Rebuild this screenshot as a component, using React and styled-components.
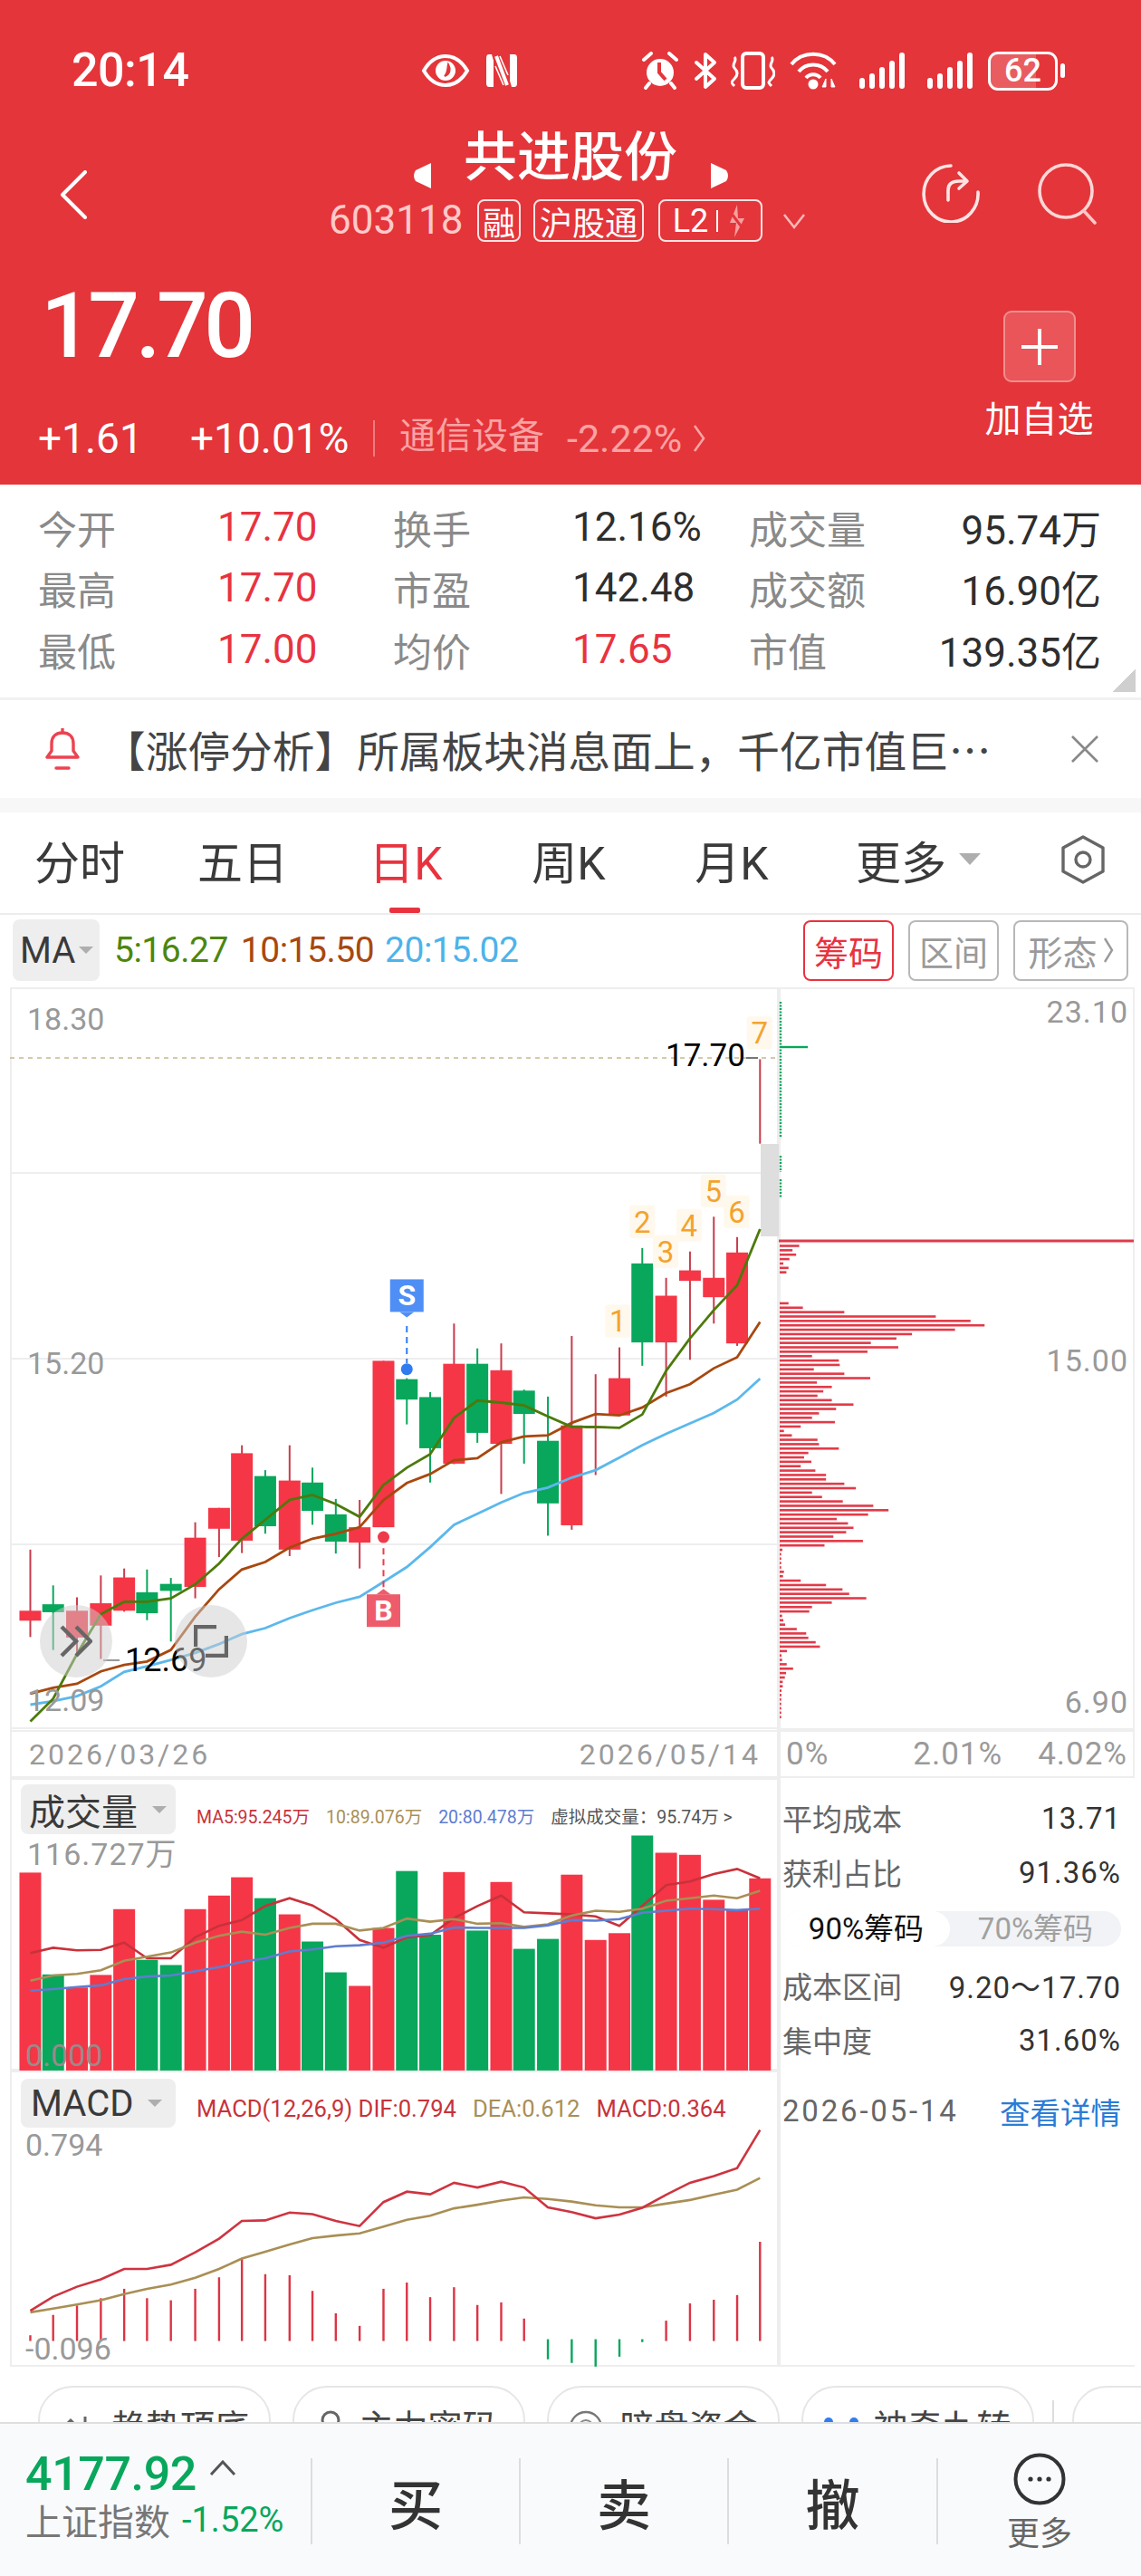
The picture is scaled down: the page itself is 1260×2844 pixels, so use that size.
import React from "react";
import styled, { createGlobalStyle } from "styled-components";

const SANS = `"Roboto","Noto Sans CJK SC",sans-serif`;
const CJK = `"Noto Sans CJK SC","Roboto",sans-serif`;
const RED = "#E8333F";
const UP = "#F53647";
const DOWN = "#08A75C";
const WICK = "#C93C4B";
const TAN = "#A98F55";

const GlobalStyle = createGlobalStyle`
  html, body { margin: 0; padding: 0; background: #fff; }
  body { font-family: ${SANS}; }
  * { box-sizing: border-box; }
`;

/* ---------- data, read from the picture ---------- */
const XS = [61,107,155,203,250,296,344,393,441,487,534,583,629,676,724,772,819,866,914,961,1009,1055,1103,1151,1199,1247,1293,1341,1389,1437,1484,1530];
const CANDLES = [
  [1150,1326,1273,1293,1],[1222,1352,1260,1276,0],[1246,1365,1273,1327,1],[1202,1370,1258,1303,1],
  [1188,1275,1206,1273,1],[1190,1292,1236,1278,0],[1207,1335,1219,1233,0],[1095,1248,1126,1225,1],
  [1066,1165,1066,1108,1],[940,1157,956,1132,1],[990,1118,1002,1103,0],[940,1163,1011,1150,1],
  [985,1100,1015,1072,0],[1048,1158,1079,1134,0],[1050,1188,1105,1136,1],[770,1105,770,1105,1],
  [805,898,807,848,0],[833,1015,843,946,0],[695,978,776,977,1],[745,935,776,915,0],
  [735,1038,789,937,1],[828,977,830,877,0],[842,1122,931,1057,0],[720,1110,900,1101,1],
  [797,1000,902,906,1],[743,880,805,880,1],[543,780,574,733,0],[603,842,639,733,1],
  [550,768,588,609,1],[480,695,603,642,1],[521,740,552,735,1],
];
const MA5 = [1496,1450,1360,1280,1255,1255,1248,1220,1178,1128,1090,1050,1040,1058,1084,1020,985,958,885,850,854,860,882,903,903,905,878,790,725,668,618,505];
const MA10 = [1440,1428,1420,1395,1382,1375,1352,1285,1230,1190,1175,1146,1128,1118,1105,1050,1016,998,970,966,934,922,920,895,877,880,864,835,817,785,763,692];
const MA20 = [1462,1455,1445,1425,1396,1385,1372,1358,1340,1320,1308,1288,1272,1257,1245,1215,1185,1145,1100,1078,1055,1036,1025,1005,990,965,940,917,896,875,848,806];
const MARKS = [[1244,690,"1"],[1293,490,"2"],[1340,550,"3"],[1387,497,"4"],[1436,428,"5"],[1483,470,"6"],[1529,110,"7"]];

const VOLS = [[221,1],[416,0],[441,1],[417,1],[291,1],[388,0],[398,0],[291,1],[265,1],[230,1],[270,0],[301,1],[353,0],[412,0],[438,1],[327,1],[218,0],[340,0],[220,1],[332,0],[239,1],[367,0],[348,0],[225,1],[350,1],[337,1],[150,0],[183,1],[187,1],[273,1],[292,1],[232,1]];
const VMA5 = [375,365,370,369,355,385,385,345,323,312,285,270,284,310,350,365,345,341,308,285,265,297,299,301,305,323,285,245,238,224,214,232];
const VMA10 = [428,418,415,408,390,382,374,355,342,334,340,327,319,319,332,327,309,315,310,319,318,325,320,303,294,296,290,275,270,265,270,256];
const VMA20 = [447,444,440,437,425,420,418,410,402,392,385,372,368,362,360,355,342,338,326,327,327,327,322,312,313,310,298,294,290,291,293,290];

const MBARS = [1107,1068,1050,1036,1018,1036,1040,1018,996,960,990,992,1022,1065,1089,1018,1006,1034,1015,1049,1044,1075,1153,1160,1167,1148,1120,1079,1046,1039,1030,928];
const DIF = [1060,1033,1014,1000,980,980,972,948,922,888,887,872,875,888,898,852,832,837,815,824,813,824,862,871,883,876,863,838,815,802,787,714];
const DEA = [1063,1056,1048,1040,1028,1018,1010,997,980,960,947,933,921,916,912,899,886,878,864,857,849,843,846,851,858,862,862,855,848,838,828,806];

const CHIPS_A = [64,42,54,32,12,29,22];
const CHIPS_B = [29,76,212,512,626,672,575,434,383,299,389,288,106,194,197,112,212,297,122,171,143,124,171,242,185,129,106,181,69,14,40,124,129,194,94,80,104,69,117,152,152,212,250,106,139,207,307,357,290,187,224,242,218,176,273,147,9,5,5,5,5,14,11,69,152,206,228,284,171,106,97,8,12,18,56,87,94,118,132,24,6,8,23,44,21,17,10,10,6,6,5,5,5,5,5];

const kx = (z) => z / 1.823 - 11;
const ky = (z) => z / 1.823 - 10;
const vy = (z) => z / 1.7345 - 23;
const my = (z) => z / 1.7345 - 346;
const line = (arr, fy) => arr.map((v, i) => `${kx(XS[i]).toFixed(1)},${fy(v).toFixed(1)}`).join(" ");

/* ---------- layout ---------- */
const Page = styled.div`
  position: relative;
  width: 1260px;
  height: 2844px;
  overflow: hidden;
  background: #fff;
  color: #333;
`;

const Header = styled.header`
  height: 535px;
  padding-top: 56px;
  background: #E4353A;
  color: #fff;
`;

const StatusBar = styled.div`
  display: flex;
  align-items: center;
  height: 44px;
  padding: 0 84px 0 79px;
`;
const Clock = styled.span`
  width: 128px;
  font-size: 52px;
  line-height: 44px;
  font-weight: 500;
  letter-spacing: -0.5px;
`;
const StatusLeft = styled.div`
  display: flex;
  align-items: center;
  gap: 16px;
  margin-left: 258px;
`;
const StatusRight = styled.div`
  display: flex;
  align-items: center;
  margin-left: auto;
`;
const Slot = styled.span`
  display: flex;
  margin-left: ${(p) => p.$ml || 0}px;
`;
const Battery = styled.span`
  position: relative;
  display: flex;
  align-items: center;
  justify-content: center;
  width: 77px;
  height: 43px;
  margin-left: 17px;
  border: 3px solid #fff;
  border-radius: 11px;
  background: linear-gradient(90deg, rgba(255,255,255,.2) 70%, transparent 70%);
  font-size: 36px;
  font-weight: 500;
  line-height: 1;
`;
const BatteryNub = styled.span`
  width: 5px;
  height: 16px;
  margin-left: 3px;
  border-radius: 3px;
  background: #fff;
`;

const NavRow = styled.div`
  display: grid;
  grid-template-columns: 363px 654px 1fr;
  height: 130px;
  margin-top: 40px;
`;
const NavSide = styled.div`
  display: flex;
  align-items: flex-start;
  padding: 48px 0 0 66px;
`;
const NavCenter = styled.div`
  display: flex;
  flex-direction: column;
`;
const TitleRow = styled.div`
  display: flex;
  height: 68px;
  align-items: flex-start;
  padding-left: 92px;
`;
const Title = styled.h1`
  margin: 0 37px 0 36px;
  width: 236px;
  font-size: 59px;
  line-height: 68px;
  font-weight: 500;
  white-space: nowrap;
`;
const NavArrow = styled.svg`
  margin-top: 40px;
`;
const SubRow = styled.div`
  display: flex;
  align-items: center;
  height: 47px;
  margin-top: 12px;
  color: #FFC9C9;
`;
const Code = styled.span`
  width: 164px;
  font-size: 44px;
  line-height: 47px;
  white-space: nowrap;
`;
const Tag = styled.span`
  display: flex;
  align-items: center;
  justify-content: center;
  gap: 9px;
  width: ${(p) => p.$w}px;
  height: 47px;
  margin-right: ${(p) => p.$mr || 0}px;
  border: 2px solid #FBE3E3;
  border-radius: 8px;
  color: #fff;
  font-size: 36px;
  white-space: nowrap;
`;
const TagBar = styled.i`
  width: 2px;
  height: 24px;
  background: #fff;
`;
const NavActions = styled.div`
  display: flex;
  align-items: flex-start;
  gap: 63px;
  padding-top: 40px;
`;

const PriceRow = styled.div`
  display: flex;
  justify-content: space-between;
  padding: 0 52px 0 42px;
  margin-top: 40px;
`;
const PriceBlock = styled.div`
  display: flex;
  flex-direction: column;
`;
const BigPrice = styled.div`
  margin-left: 3px;
  height: 100px;
  font-size: 100px;
  line-height: 100px;
  font-weight: 500;
  letter-spacing: -4.5px;
`;
const ChangeRow = styled.div`
  display: flex;
  align-items: center;
  height: 44px;
  margin-top: 52px;
  font-size: 46px;
  white-space: nowrap;
`;
const Change = styled.span`
  width: ${(p) => p.$w}px;
`;
const ChangeBar = styled.i`
  width: 2px;
  height: 40px;
  margin: 0 27px 0 0;
  background: #EE7C80;
`;
const Sector = styled.span`
  color: #F9A3A3;
  font-size: 40px;
  line-height: 40px;
  margin: -4px 25px 0 0;
`;
const SectorPct = styled.span`
  color: #F9A3A3;
  font-size: 43px;
  margin-right: 12px;
`;
const AddBlock = styled.div`
  display: flex;
  flex-direction: column;
  align-items: center;
  width: 121px;
  margin-top: 33px;
`;
const AddBox = styled.div`
  display: flex;
  align-items: center;
  justify-content: center;
  width: 80px;
  height: 79px;
  border: 2px solid #F08F8F;
  border-radius: 9px;
  background: #E95558;
`;
const AddText = styled.span`
  margin-top: 22px;
  font-size: 40px;
  line-height: 40px;
  white-space: nowrap;
`;

const Stats = styled.section`
  position: relative;
  height: 238px;
  padding: 13px 0 0 42px;
  border-bottom: 3px solid #F1F1F1;
  display: grid;
  grid-template-columns: 198px 194px 198px 195px 389px;
  grid-auto-rows: 67.5px;
  align-content: start;
`;
const StatLabel = styled.span`
  display: flex;
  align-items: center;
  font-size: 43px;
  color: #8A8A8A;
`;
const StatValue = styled.span`
  display: flex;
  align-items: center;
  font-size: 44px;
  color: ${(p) => (p.$red ? RED : "#2E2E2E")};
  white-space: nowrap;
`;
const StatPair = styled.div`
  display: flex;
  align-items: center;
  justify-content: space-between;
`;
const Corner = styled.i`
  position: absolute;
  right: 6px;
  bottom: 6px;
  width: 26px;
  height: 26px;
  background: linear-gradient(135deg, transparent 50%, #CFCFCF 50%);
`;

const Notice = styled.div`
  display: flex;
  align-items: center;
  height: 108px;
  padding-left: 50px;
  background: #fff;
`;
const NoticeText = styled.span`
  flex: 1;
  margin-left: 26px;
  font-family: ${CJK};
  font-size: 46.7px;
  line-height: 60px;
  color: #444;
  white-space: nowrap;
`;
const NoticeClose = styled.svg`
  margin-right: 46px;
`;
const Gap = styled.div`
  height: 16px;
  background: #F7F7F7;
`;

const Tabs = styled.nav`
  display: grid;
  grid-template-columns: repeat(5, 180px) 232px 1fr;
  align-items: stretch;
  height: 113px;
  border-bottom: 2px solid #ECECEC;
`;
const Tab = styled.div`
  position: relative;
  display: flex;
  align-items: center;
  justify-content: center;
  gap: 14px;
  padding: 0 4px 8px 0;
  font-size: 50px;
  color: ${(p) => (p.$active ? RED : "#3A3A3A")};
`;
const TabUnderline = styled.i`
  position: absolute;
  left: 50%;
  bottom: 0;
  width: 34px;
  height: 6px;
  margin-left: -20px;
  border-radius: 2px;
  background: ${RED};
`;
const Caret = styled.i`
  width: 0;
  height: 0;
  border-left: ${(p) => p.$s}px solid transparent;
  border-right: ${(p) => p.$s}px solid transparent;
  border-top: ${(p) => p.$s * 1.1}px solid #AEAEAE;
`;
const GearCell = styled.div`
  display: flex;
  align-items: center;
  justify-content: center;
  padding-bottom: 8px;
`;

const MaRow = styled.div`
  display: flex;
  align-items: center;
  height: 78px;
  padding: 0 14px 0 14px;
`;
const Selector = styled.div`
  display: flex;
  align-items: center;
  gap: ${(p) => p.$gap || 4}px;
  width: ${(p) => p.$w}px;
  height: ${(p) => p.$h}px;
  padding-left: ${(p) => p.$pl || 0}px;
  border-radius: 8px;
  background: #EEEEEE;
  font-size: 40px;
  color: #3A3A3A;
  white-space: nowrap;
`;
const MaValue = styled.span`
  margin-left: ${(p) => p.$ml}px;
  font-size: 39px;
  letter-spacing: -0.5px;
  color: ${(p) => p.$c};
  white-space: nowrap;
`;
const ModeGroup = styled.div`
  display: flex;
  gap: 16px;
  margin-left: auto;
`;
const ModeBtn = styled.div`
  display: flex;
  align-items: center;
  justify-content: center;
  gap: 6px;
  width: ${(p) => p.$w}px;
  height: 67px;
  border: 2px solid ${(p) => (p.$on ? RED : "#B8B8B8")};
  border-radius: 8px;
  font-size: 38px;
  color: ${(p) => (p.$on ? RED : "#9A9A9A")};
  white-space: nowrap;
`;

const Charts = styled.div`
  display: grid;
  grid-template-columns: 849px 393px;
  grid-template-rows: 873px 650px;
  margin-left: 11px;
  margin-top: 2px;
`;
const Panel = styled.div`
  position: relative;
  height: ${(p) => p.$h}px;
  box-shadow: inset 0 0 0 2px #EEEEEE;
`;
const LeftCol = styled.div`
  display: flex;
  flex-direction: column;
`;
const ChartSvg = styled.svg`
  position: absolute;
  left: 0;
  top: 0;
  display: block;
`;
const AxisLabel = styled.span`
  position: absolute;
  left: ${(p) => p.$x}px;
  top: ${(p) => p.$y}px;
  transform: translateY(-50%);
  font-size: ${(p) => p.$size || 34}px;
  letter-spacing: ${(p) => p.$ls || 0}px;
  color: ${(p) => p.$c || "#999999"};
  white-space: nowrap;
`;
const RightLabel = styled(AxisLabel)`
  left: auto;
  right: ${(p) => p.$r}px;
`;
const FloatBtn = styled.div`
  position: absolute;
  left: ${(p) => p.$x}px;
  top: 682px;
  display: flex;
  align-items: center;
  justify-content: center;
  width: 80px;
  height: 80px;
  border-radius: 50%;
  background: rgba(205, 205, 205, 0.5);
`;
const DateRow = styled.div`
  position: absolute;
  left: 0;
  right: 0;
  bottom: 0;
  display: flex;
  align-items: center;
  justify-content: space-between;
  height: 53px;
  padding: 0 ${(p) => p.$pr}px 0 ${(p) => p.$pl}px;
  box-shadow: inset 0 2px 0 #EEEEEE;
  font-size: ${(p) => p.$size}px;
  letter-spacing: ${(p) => p.$ls}px;
  color: #9A9A9A;
`;
const MidPct = styled.span`
  margin-left: 54px;
`;
const PanelHead = styled.div`
  position: relative;
  display: flex;
  align-items: flex-start;
  padding: ${(p) => p.$pt}px 0 0 12px;
`;
const LegendRow = styled.div`
  display: flex;
  align-items: center;
  gap: ${(p) => p.$gap}px;
  height: 55px;
  margin-left: 23px;
  padding-top: ${(p) => p.$offset}px;
`;
const Legend = styled.span`
  font-size: ${(p) => p.$size}px;
  color: ${(p) => p.$c};
  white-space: nowrap;
`;

const Info = styled.aside`
  position: relative;
  height: 650px;
  padding: 14px 15px 0 4px;
  box-shadow: inset 2px 0 0 #EEEEEE, inset 0 -2px 0 #EEEEEE;
`;
const InfoRow = styled.div`
  display: flex;
  align-items: center;
  justify-content: space-between;
  height: 60px;
  margin-top: ${(p) => p.$mt || 0}px;
  font-size: 33px;
  white-space: nowrap;
`;
const InfoLabel = styled.span`
  color: #666;
  letter-spacing: ${(p) => p.$ls || 0}px;
`;
const InfoValue = styled.span`
  color: #333;
  letter-spacing: 1px;
`;
const InfoLink = styled.span`
  font-size: 33.5px;
  color: #2A7CD6;
`;
const Toggle = styled.div`
  display: grid;
  grid-template-columns: 185px 1fr;
  height: 39px;
  margin-top: 13px;
  border-radius: 20px;
  background: #F1F3F6;
  font-size: 33px;
  line-height: 39px;
  text-align: center;
  color: #A0A0A0;
  white-space: nowrap;
`;
const ToggleOn = styled.span`
  border-radius: 20px;
  background: #fff;
  color: #111;
`;

const PillRow = styled.div`
  display: flex;
  align-items: flex-start;
  gap: 24px;
  margin-top: 21px;
  padding-left: 42px;
  overflow: hidden;
`;
const Pill = styled.div`
  display: flex;
  align-items: flex-start;
  justify-content: center;
  gap: ${(p) => p.$gap || 20}px;
  flex: none;
  width: 257px;
  height: 76px;
  padding-top: 24px;
  border: 2px solid #E6E6E6;
  border-radius: 38px;
  font-size: 38px;
  line-height: 40px;
  color: #444;
  white-space: nowrap;
`;
const PillSep = styled.i`
  flex: none;
  width: 2px;
  height: 30px;
  margin: 16px -4px 0 -4px;
  background: #DDD;
`;

const BottomBar = styled.footer`
  position: absolute;
  left: 0;
  right: 0;
  bottom: 0;
  display: grid;
  grid-template-columns: 343px 230px 230px 231px 226px;
  height: 170px;
  padding-top: 38px;
  border-top: 2px solid #DEDEDE;
  background: #F9FAFC;
`;
const IndexCell = styled.div`
  display: flex;
  flex-direction: column;
  height: 95px;
  padding-left: 28px;
`;
const IndexTop = styled.div`
  display: flex;
  align-items: flex-start;
  height: 52px;
  margin-top: -8px;
`;
const IndexValue = styled.span`
  font-size: 52px;
  line-height: 52px;
  font-weight: 500;
  letter-spacing: -0.4px;
  color: ${DOWN};
`;
const IndexArrow = styled.svg`
  margin: 10px 0 0 14px;
`;
const IndexBottom = styled.div`
  display: flex;
  align-items: center;
  gap: 13px;
  height: 44px;
  margin-top: 2px;
`;
const IndexName = styled.span`
  font-size: 40px;
  color: #777;
  white-space: nowrap;
`;
const IndexPct = styled.span`
  font-size: 38px;
  color: ${DOWN};
`;
const ActionCell = styled.div`
  display: flex;
  align-items: center;
  justify-content: center;
  height: 95px;
  border-left: 2px solid #DDDDDD;
  font-size: 60px;
  font-weight: 500;
  color: #333;
`;
const MoreCell = styled.div`
  display: flex;
  flex-direction: column;
  align-items: center;
  height: 95px;
  border-left: 2px solid #DDDDDD;
  font-size: 36px;
  line-height: 40px;
  color: #666;
`;
const MoreIcon = styled.svg`
  margin-top: -6px;
  margin-bottom: 12px;
  flex: none;
`;

/* ---------- small drawings ---------- */
const W = "#fff";
const HEAD = "#E4353A";
const EyeIcon = () => (
  <svg width="54" height="36" viewBox="0 0 54 36">
    <path d="M3 18 C10 6 18 2 27 2 S44 6 51 18 C44 30 36 34 27 34 S10 30 3 18Z" fill="none" stroke={W} strokeWidth="4" />
    <circle cx="27" cy="18" r="11" fill={W} />
    <path d="M30 11 C33 16 32 22 26 24 C30 20 29 15 30 11Z" fill={HEAD} stroke={HEAD} strokeWidth="2" />
  </svg>
);
const NfcIcon = () => (
  <svg width="38" height="38" viewBox="0 0 38 38">
    <path d="M10 1 H5 Q2 1 2 5 V33 Q2 37 5 37 H10 V8 L8 1 Z M28 37 H33 Q36 37 36 33 V5 Q36 1 33 1 H28 V30 L30 37 Z" fill={W} />
    <path d="M13 3 L25 35" stroke={W} strokeWidth="4" />
    <path d="M17 3 L26 24 M12 14 L21 35" stroke={W} strokeWidth="1.6" />
  </svg>
);
const AlarmIcon = () => (
  <svg width="42" height="42" viewBox="0 0 42 42">
    <circle cx="21" cy="23" r="15" fill={W} />
    <path d="M3 9 L11 2 M39 9 L31 2 M9 35 L5 40 M33 35 L37 40" stroke={W} strokeWidth="4" strokeLinecap="round" />
    <path d="M20 12 V23 L27 31" stroke={HEAD} strokeWidth="4" fill="none" />
  </svg>
);
const BtIcon = () => (
  <svg width="26" height="42" viewBox="0 0 26 42">
    <path d="M3 12 L23 30 L13 39 V3 L23 12 L3 30" fill="none" stroke={W} strokeWidth="4" strokeLinejoin="round" strokeLinecap="round" />
  </svg>
);
const VibrateIcon = () => (
  <svg width="49" height="42" viewBox="0 0 49 42">
    <rect x="13" y="2" width="23" height="38" rx="4" fill="none" stroke={W} strokeWidth="4" />
    <path d="M4 6 C8 10 0 14 4 18 S8 26 4 30 S0 34 4 38 M45 6 C49 10 41 14 45 18 S49 26 45 30 S41 34 45 38" fill="none" stroke={W} strokeWidth="3" />
  </svg>
);
const WifiIcon = () => (
  <svg width="52" height="42" viewBox="0 0 52 42">
    <path d="M2 14 C14 -1 38 -1 50 14 M10 22 C18 12 34 12 42 22 M18 29 C22 24 30 24 34 29" fill="none" stroke={W} strokeWidth="4" />
    <circle cx="26" cy="36" r="5.5" fill={W} />
    <path d="M40 30 L36 39 H40 V30 M46 30 V39 L50 39 Z" fill={W} stroke={W} strokeWidth="1" />
  </svg>
);
const SignalIcon = () => (
  <svg width="50" height="42" viewBox="0 0 50 42">
    <g fill={W}>
      <rect x="0" y="29" width="6" height="12" rx="3" />
      <rect x="11" y="24" width="6" height="17" rx="3" />
      <rect x="22" y="17" width="6" height="24" rx="3" />
      <rect x="33" y="10" width="6" height="31" rx="3" />
      <rect x="44" y="1" width="6" height="40" rx="3" />
    </g>
  </svg>
);
const BackIcon = () => (
  <svg width="30" height="54" viewBox="0 0 30 54">
    <path d="M28 2 L3 27 L28 52" fill="none" stroke={W} strokeWidth="4" strokeLinecap="round" strokeLinejoin="round" />
  </svg>
);
const ShareIcon = () => (
  <svg width="66" height="66" viewBox="0 0 66 66">
    <g fill="none" stroke="#FFE4E4" strokeWidth="3.6" strokeLinecap="round" strokeLinejoin="round">
      <path d="M33 3 A30 31 0 1 0 63 32" />
      <path d="M30 41 V30 Q30 20 42 20 H50" />
      <path d="M42 11 L51 20 L42 28" />
    </g>
  </svg>
);
const SearchIcon = () => (
  <svg width="66" height="68" viewBox="0 0 66 68">
    <circle cx="31" cy="31" r="29" fill="none" stroke="#FFD6D6" strokeWidth="3.6" />
    <path d="M51 53 L63 66" stroke="#FFC4C4" strokeWidth="3.6" strokeLinecap="round" />
  </svg>
);
const FlashOff = () => (
  <svg width="24" height="40" viewBox="0 0 24 40">
    <path d="M12 2 L4 22 H11 L9 38 L20 17 H13 Z" fill="#F8A0A0" />
    <path d="M3 8 L21 32" stroke={HEAD} strokeWidth="3" />
  </svg>
);
const Bell = () => (
  <svg width="38" height="46" viewBox="0 0 38 46">
    <g fill="none" stroke="#EC4350" strokeWidth="3.4" strokeLinejoin="round" strokeLinecap="round">
      <path d="M2 32 H36 L31 25 V17 C31 9 26 5 19 5 S7 9 7 17 V25 Z" />
      <path d="M19 1 V5" />
      <path d="M12 44 H26" />
    </g>
  </svg>
);
const Gear = () => (
  <svg width="50" height="54" viewBox="0 0 50 54">
    <path d="M25 2 L47 14 V40 L25 52 L3 40 V14 Z" fill="none" stroke="#666" strokeWidth="3.4" strokeLinejoin="round" />
    <circle cx="25" cy="27" r="8" fill="none" stroke="#666" strokeWidth="3.4" />
  </svg>
);

const Candles = () => (
  <g>
    {CANDLES.map(([wt, wb, bt, bb, up], i) => {
      const x = kx(XS[i]);
      const c = up ? UP : DOWN;
      return (
        <g key={i}>
          <line x1={x} x2={x} y1={ky(wt)} y2={ky(wb)} stroke={up ? WICK : DOWN} strokeWidth="2" />
          <rect x={x - 12} y={ky(bt)} width="24" height={Math.max(ky(bb) - ky(bt), 2)} fill={c} />
        </g>
      );
    })}
    <line x1={kx(1530)} x2={kx(1530)} y1={ky(163)} y2={ky(333)} stroke={WICK} strokeWidth="2" />
  </g>
);

const SignalTag = ({ kind }) => {
  const up = kind === "B";
  const cx = kx(up ? 772 : 819);
  const boxY = ky(up ? 1240 : 606);
  const fill = up ? "#EE5C6C" : "#4F8EF5";
  const dot = up ? "#EE3B4B" : "#2E7CF0";
  return (
    <g>
      <rect x={cx - 18.5} y={boxY} width="37" height="36" fill={fill} />
      <path d={up ? `M${cx - 8} ${boxY} L${cx} ${boxY - 6} L${cx + 8} ${boxY} Z` : `M${cx - 8} ${boxY + 36} L${cx} ${boxY + 42} L${cx + 8} ${boxY + 36} Z`} fill={fill} />
      <line x1={cx} x2={cx} y1={ky(up ? 1147 : 700)} y2={ky(up ? 1228 : 775)} stroke={dot} strokeWidth="2" strokeDasharray="7 5" />
      <circle cx={cx} cy={ky(up ? 1125 : 787)} r="6.5" fill={dot} />
      <text x={cx} y={boxY + 29} textAnchor="middle" fontFamily="Roboto, sans-serif" fontSize="32" fontWeight="700" fill="#fff">{kind}</text>
    </g>
  );
};

const KSvg = () => (
  <ChartSvg width="849" height="820" viewBox="0 0 849 820">
    {[205, 410, 615, 818].map((y) => (
      <line key={y} x1="0" x2="849" y1={y} y2={y} stroke="#EEEEEE" strokeWidth="2" />
    ))}
    <line x1="0" x2="849" y1="78" y2="78" stroke="#C9B98C" strokeWidth="1.6" strokeDasharray="5 5" />
    <rect x="829" y="173" width="20" height="102" fill="#DEDEDE" />
    <Candles />
    <polyline points={line(MA20, ky)} fill="none" stroke="#5BB8EC" strokeWidth="2.8" />
    <polyline points={line(MA10, ky)} fill="none" stroke="#A8480F" strokeWidth="2.8" />
    <polyline points={line(MA5, ky)} fill="none" stroke="#4C7A0B" strokeWidth="2.8" />
    <SignalTag kind="S" />
    <SignalTag kind="B" />
    {MARKS.map(([x, y, t]) => (
      <g key={t}>
        <rect x={kx(x) - 14} y={ky(y) - 18} width="28" height="36" rx="3" fill="#FFF8EC" />
        <text x={kx(x)} y={ky(y) + 12} textAnchor="middle" fontFamily="Roboto, sans-serif" fontSize="33" fill="#F3A32E">{t}</text>
      </g>
    ))}
    <text x="724" y="87" fontFamily="Roboto, sans-serif" fontSize="35" fill="#000">17.70</text>
    <line x1="813" x2="826" y1="78" y2="78" stroke="#777" strokeWidth="2" />
    <line x1="103" x2="121" y1="743" y2="743" stroke="#999" strokeWidth="2" />
    <text x="127" y="755" fontFamily="Roboto, sans-serif" fontSize="36" fill="#000">12.69</text>
  </ChartSvg>
);

const ChipSvg = () => {
  const bar = (v, i, start) => (
    <rect key={`${start}-${i}`} x="1" y={start + i * 4.86} width={v / 2.97} height="2.6" fill="#E23A48" />
  );
  return (
    <ChartSvg width="393" height="820" viewBox="0 0 393 820">
      <line x1="2" x2="2" y1="16" y2="165" stroke={DOWN} strokeWidth="2.4" strokeDasharray="2 1.5" />
      <line x1="2" x2="2" y1="186" y2="204" stroke={DOWN} strokeWidth="2.4" strokeDasharray="2 1.5" />
      <line x1="2" x2="2" y1="212" y2="233" stroke={DOWN} strokeWidth="2.4" strokeDasharray="2 1.5" />
      <line x1="2" x2="32" y1="66" y2="66" stroke={DOWN} strokeWidth="2.4" />
      <line x1="0" x2="392" y1="280" y2="280" stroke="#DC3C4A" strokeWidth="3" />
      {CHIPS_A.map((v, i) => bar(v, i, 284.2))}
      {CHIPS_B.map((v, i) => bar(v, i, 347.6))}
      <line x1="0" x2="393" y1="819" y2="819" stroke="#EEEEEE" strokeWidth="2" />
    </ChartSvg>
  );
};

const VolumeSvg = () => (
  <ChartSvg width="849" height="323" viewBox="0 0 849 323">
    {VOLS.map(([t, up], i) => (
      <rect key={i} x={kx(XS[i]) - 12} y={vy(t)} width="24" height={vy(600) - vy(t)} fill={up ? UP : DOWN} />
    ))}
    <polyline points={line(VMA5, vy)} fill="none" stroke="#C8323A" strokeWidth="2.6" />
    <polyline points={line(VMA10, vy)} fill="none" stroke={TAN} strokeWidth="2.6" />
    <polyline points={line(VMA20, vy)} fill="none" stroke="#5F7DD0" strokeWidth="2.6" />
  </ChartSvg>
);

const MacdSvg = () => (
  <ChartSvg width="849" height="327" viewBox="0 0 849 327">
    {MBARS.map((t, i) => {
      const base = my(1118);
      const y = my(t);
      const down = t > 1118;
      return (
        <rect key={i} x={kx(XS[i]) - 1.2} y={down ? base - 2 : y} width="2.4" height={down ? y - base + 2 : base - y} fill={down ? DOWN : "#DC3444"} />
      );
    })}
    <polyline points={line(DEA, my)} fill="none" stroke={TAN} strokeWidth="2.6" />
    <polyline points={line(DIF, my)} fill="none" stroke="#CE3440" strokeWidth="2.6" />
  </ChartSvg>
);

const STATS = [
  ["今开", "17.70", true, "换手", "12.16%", false, "成交量", "95.74万"],
  ["最高", "17.70", true, "市盈", "142.48", false, "成交额", "16.90亿"],
  ["最低", "17.00", true, "均价", "17.65", true, "市值", "139.35亿"],
];

const PILLS = [
  ["趋势顶底", 25, <svg key="a" width="32" height="36" viewBox="0 0 32 36"><path d="M2 22 L12 12 L22 22 M12 12 V34 M28 8 V34" fill="none" stroke="#666" strokeWidth="3" /></svg>],
  ["主力密码", 20, <svg key="b" width="22" height="36" viewBox="0 0 22 36"><circle cx="11" cy="12" r="9" fill="none" stroke="#666" strokeWidth="3" /></svg>],
  ["暗盘资金", 18, <svg key="c" width="38" height="36" viewBox="0 0 38 36"><circle cx="19" cy="20" r="17" fill="none" stroke="#777" strokeWidth="2.4" /><circle cx="19" cy="20" r="8" fill="none" stroke="#888" strokeWidth="2" /></svg>],
  ["神奇九转", 16, <svg key="d" width="38" height="36" viewBox="0 0 38 36"><circle cx="5" cy="14" r="5" fill="#2F7DF0" /><circle cx="33" cy="14" r="5" fill="#2F7DF0" /></svg>],
];

export default function App() {
  return (
    <Page>
      <GlobalStyle />
      <Header>
        <StatusBar>
          <Clock>20:14</Clock>
          <StatusLeft>
            <EyeIcon />
            <NfcIcon />
          </StatusLeft>
          <StatusRight>
            <Slot><AlarmIcon /></Slot>
            <Slot $ml={16}><BtIcon /></Slot>
            <Slot $ml={15}><VibrateIcon /></Slot>
            <Slot $ml={16}><WifiIcon /></Slot>
            <Slot $ml={25}><SignalIcon /></Slot>
            <Slot $ml={25}><SignalIcon /></Slot>
            <Battery>62</Battery>
            <BatteryNub />
          </StatusRight>
        </StatusBar>
        <NavRow>
          <NavSide><BackIcon /></NavSide>
          <NavCenter>
            <TitleRow>
              <NavArrow width="21" height="28" viewBox="0 0 21 28"><path d="M21 0 V28 L4 20 Q0 14 4 8 Z" fill="#fff" /></NavArrow>
              <Title>共进股份</Title>
              <NavArrow width="21" height="28" viewBox="0 0 21 28"><path d="M0 0 V28 L17 20 Q21 14 17 8 Z" fill="#fff" /></NavArrow>
            </TitleRow>
            <SubRow>
              <Code>603118</Code>
              <Tag $w={48} $mr={14}>融</Tag>
              <Tag $w={122} $mr={16}>沪股通</Tag>
              <Tag $w={115} $mr={22}>L2<TagBar /><FlashOff /></Tag>
              <svg width="26" height="20" viewBox="0 0 26 20"><path d="M2 3 L13 17 L24 3" fill="none" stroke="#F9B8B8" strokeWidth="2.6" /></svg>
            </SubRow>
          </NavCenter>
          <NavActions>
            <ShareIcon />
            <SearchIcon />
          </NavActions>
        </NavRow>
        <PriceRow>
          <PriceBlock>
            <BigPrice>17.70</BigPrice>
            <ChangeRow>
              <Change $w={168}>+1.61</Change>
              <Change $w={202}>+10.01%</Change>
              <ChangeBar />
              <Sector>通信设备</Sector>
              <SectorPct>-2.22%</SectorPct>
              <svg width="14" height="32" viewBox="0 0 14 32"><path d="M2 2 L12 16 L2 30" fill="none" stroke="#F9A3A3" strokeWidth="2.6" /></svg>
            </ChangeRow>
          </PriceBlock>
          <AddBlock>
            <AddBox>
              <svg width="42" height="42" viewBox="0 0 42 42"><path d="M21 1 V41 M1 21 H41" stroke="#fff" strokeWidth="4" /></svg>
            </AddBox>
            <AddText>加自选</AddText>
          </AddBlock>
        </PriceRow>
      </Header>

      <Stats>
        {STATS.map((r) => (
          <React.Fragment key={r[0]}>
            <StatLabel>{r[0]}</StatLabel>
            <StatValue $red={r[2]}>{r[1]}</StatValue>
            <StatLabel>{r[3]}</StatLabel>
            <StatValue $red={r[5]}>{r[4]}</StatValue>
            <StatPair>
              <StatLabel>{r[6]}</StatLabel>
              <StatValue>{r[7]}</StatValue>
            </StatPair>
          </React.Fragment>
        ))}
        <Corner />
      </Stats>

      <Notice>
        <Bell />
        <NoticeText>【涨停分析】所属板块消息面上，千亿市值巨…</NoticeText>
        <NoticeClose width="32" height="32" viewBox="0 0 32 32">
          <path d="M2 2 L30 30 M30 2 L2 30" stroke="#888" strokeWidth="2.6" />
        </NoticeClose>
      </Notice>
      <Gap />

      <Tabs>
        <Tab>分时</Tab>
        <Tab>五日</Tab>
        <Tab $active>日K<TabUnderline /></Tab>
        <Tab>周K</Tab>
        <Tab>月K</Tab>
        <Tab>更多<Caret $s={12} /></Tab>
        <GearCell><Gear /></GearCell>
      </Tabs>

      <MaRow>
        <Selector $w={96} $h={68} $pl={8}>MA<Caret $s={8} /></Selector>
        <MaValue $ml={16} $c="#4C860F">5:16.27</MaValue>
        <MaValue $ml={14} $c="#A8480F">10:15.50</MaValue>
        <MaValue $ml={12} $c="#4DB3EA">20:15.02</MaValue>
        <ModeGroup>
          <ModeBtn $w={100} $on>筹码</ModeBtn>
          <ModeBtn $w={100}>区间</ModeBtn>
          <ModeBtn $w={127}>
            形态
            <svg width="12" height="30" viewBox="0 0 12 30"><path d="M2 2 L10 15 L2 28" fill="none" stroke="#9A9A9A" strokeWidth="2.4" /></svg>
          </ModeBtn>
        </ModeGroup>
      </MaRow>

      <Charts>
        <Panel $h={873}>
          <KSvg />
          <AxisLabel $x={19} $y={35}>18.30</AxisLabel>
          <AxisLabel $x={19} $y={415}>15.20</AxisLabel>
          <AxisLabel $x={19} $y={787}>12.09</AxisLabel>
          <FloatBtn $x={33}>
            <svg width="36" height="36" viewBox="0 0 36 36"><path d="M2 2 L18 18 L2 34 M18 2 L34 18 L18 34" fill="none" stroke="#666" strokeWidth="4.4" /></svg>
          </FloatBtn>
          <FloatBtn $x={182}>
            <svg width="38" height="36" viewBox="0 0 38 36"><path d="M2 24 V2 H25 M36 12 V34 H13" fill="none" stroke="#666" strokeWidth="4.4" /></svg>
          </FloatBtn>
          <DateRow $pl={21} $pr={20} $size={32} $ls={3}>
            <span>2026/03/26</span>
            <span>2026/05/14</span>
          </DateRow>
        </Panel>

        <Panel $h={873}>
          <ChipSvg />
          <RightLabel $r={7} $y={27} $ls={1}>23.10</RightLabel>
          <RightLabel $r={7} $y={412} $ls={1}>15.00</RightLabel>
          <RightLabel $r={7} $y={789} $ls={1}>6.90</RightLabel>
          <DateRow $pl={8} $pr={8} $size={35} $ls={1}>
            <span>0%</span>
            <MidPct>2.01%</MidPct>
            <span>4.02%</span>
          </DateRow>
        </Panel>

        <LeftCol>
          <Panel $h={323}>
            <VolumeSvg />
            <PanelHead $pt={7}>
              <Selector $w={171} $h={55} $pl={9} $gap={16}>成交量<Caret $s={8} /></Selector>
              <LegendRow $gap={18} $offset={14}>
                <Legend $size={19.5} $c="#C8323A">MA5:95.245万</Legend>
                <Legend $size={19.5} $c={TAN}>10:89.076万</Legend>
                <Legend $size={19.5} $c="#5F7DD0">20:80.478万</Legend>
                <Legend $size={19.5} $c="#555">虚拟成交量：95.74万 &gt;</Legend>
              </LegendRow>
            </PanelHead>
            <AxisLabel $x={19} $y={81} $ls={1}>116.727万</AxisLabel>
            <AxisLabel $x={17} $y={306} $c="#9A8A8A">0.000</AxisLabel>
          </Panel>
          <Panel $h={327}>
            <MacdSvg />
            <PanelHead $pt={9}>
              <Selector $w={171} $h={54} $pl={11} $gap={16}>MACD<Caret $s={8} /></Selector>
              <LegendRow $gap={18} $offset={10}>
                <Legend $size={25.6} $c="#C8323A">MACD(12,26,9) DIF:0.794</Legend>
                <Legend $size={25.6} $c={TAN}>DEA:0.612</Legend>
                <Legend $size={25.6} $c="#C8323A">MACD:0.364</Legend>
              </LegendRow>
            </PanelHead>
            <AxisLabel $x={17} $y={82}>0.794</AxisLabel>
            <AxisLabel $x={17} $y={307}>-0.096</AxisLabel>
          </Panel>
        </LeftCol>

        <Info>
          <InfoRow>
            <InfoLabel>平均成本</InfoLabel>
            <InfoValue>13.71</InfoValue>
          </InfoRow>
          <InfoRow>
            <InfoLabel>获利占比</InfoLabel>
            <InfoValue>91.36%</InfoValue>
          </InfoRow>
          <Toggle>
            <ToggleOn>90%筹码</ToggleOn>
            <span>70%筹码</span>
          </Toggle>
          <InfoRow $mt={13}>
            <InfoLabel>成本区间</InfoLabel>
            <InfoValue>9.20～17.70</InfoValue>
          </InfoRow>
          <InfoRow>
            <InfoLabel>集中度</InfoLabel>
            <InfoValue>31.60%</InfoValue>
          </InfoRow>
          <InfoRow $mt={18}>
            <InfoLabel $ls={2.8}>2026-05-14</InfoLabel>
            <InfoLink>查看详情</InfoLink>
          </InfoRow>
        </Info>
      </Charts>

      <PillRow>
        {PILLS.map(([t, gap, icon]) => (
          <Pill key={t} $gap={gap}>{icon}{t}</Pill>
        ))}
        <PillSep />
        <Pill>
          <svg width="60" height="36" viewBox="0 0 60 36"><circle cx="30" cy="28" r="24" fill="none" stroke="#2F7DF0" strokeWidth="3" /><path d="M30 4 V20" stroke="#2F7DF0" strokeWidth="3" /></svg>
        </Pill>
      </PillRow>

      <BottomBar>
        <IndexCell>
          <IndexTop>
            <IndexValue>4177.92</IndexValue>
            <IndexArrow width="30" height="18" viewBox="0 0 30 18"><path d="M2 16 L15 2 L28 16" fill="none" stroke="#555" strokeWidth="3" /></IndexArrow>
          </IndexTop>
          <IndexBottom>
            <IndexName>上证指数</IndexName>
            <IndexPct>-1.52%</IndexPct>
          </IndexBottom>
        </IndexCell>
        <ActionCell>买</ActionCell>
        <ActionCell>卖</ActionCell>
        <ActionCell>撤</ActionCell>
        <MoreCell>
          <MoreIcon width="58" height="58" viewBox="0 0 58 58">
            <circle cx="29" cy="29" r="26.5" fill="none" stroke="#333" strokeWidth="4" />
            <circle cx="19" cy="29" r="2.6" fill="#333" />
            <circle cx="29" cy="29" r="2.6" fill="#333" />
            <circle cx="39" cy="29" r="2.6" fill="#333" />
          </MoreIcon>
          更多
        </MoreCell>
      </BottomBar>
    </Page>
  );
}
